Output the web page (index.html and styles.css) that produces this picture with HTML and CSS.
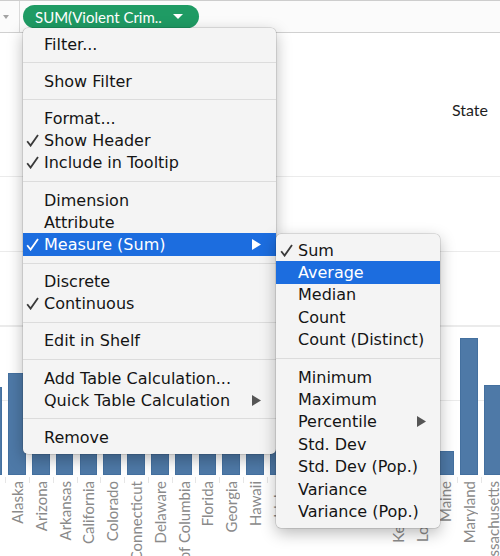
FILE: index.html
```html
<!DOCTYPE html>
<html>
<head>
<meta charset="utf-8">
<link rel="stylesheet" href="styles.css">
</head>
<body>
<div class="app">
  <div class="shelf">
    <div class="shelf-cap"><span class="caret-gray"></span></div>
    <div class="pill"><span class="pill-text">SUM(Violent Crim..</span><span class="pill-caret"></span></div>
  </div>
  <div class="view">
    <div class="header-band"><span class="field">State</span></div>
    <div class="chart">
      <div class="col"><div class="slot"><div class="bar" style="height:88px"></div></div><div class="lab"><span>Alabama</span></div></div>
      <div class="col"><div class="slot"><div class="bar" style="height:102px"></div></div><div class="lab"><span>Alaska</span></div></div>
      <div class="col"><div class="slot"><div class="bar" style="height:96px"></div></div><div class="lab"><span>Arizona</span></div></div>
      <div class="col"><div class="slot"><div class="bar" style="height:98px"></div></div><div class="lab"><span>Arkansas</span></div></div>
      <div class="col"><div class="slot"><div class="bar" style="height:85px"></div></div><div class="lab"><span>California</span></div></div>
      <div class="col"><div class="slot"><div class="bar" style="height:65px"></div></div><div class="lab"><span>Colorado</span></div></div>
      <div class="col"><div class="slot"><div class="bar" style="height:60px"></div></div><div class="lab"><span>Connecticut</span></div></div>
      <div class="col"><div class="slot"><div class="bar" style="height:104px"></div></div><div class="lab"><span>Delaware</span></div></div>
      <div class="col"><div class="slot"><div class="bar" style="height:337px"></div></div><div class="lab"><span>District of Columbia</span></div></div>
      <div class="col"><div class="slot"><div class="bar" style="height:104px"></div></div><div class="lab"><span>Florida</span></div></div>
      <div class="col"><div class="slot"><div class="bar" style="height:82px"></div></div><div class="lab"><span>Georgia</span></div></div>
      <div class="col"><div class="slot"><div class="bar" style="height:52px"></div></div><div class="lab"><span>Hawaii</span></div></div>
      <div class="col"><div class="slot"><div class="bar" style="height:45px"></div></div><div class="lab"><span>Idaho</span></div></div>
      <div class="col"><div class="slot"><div class="bar" style="height:90px"></div></div><div class="lab"><span>Illinois</span></div></div>
      <div class="col"><div class="slot"><div class="bar" style="height:70px"></div></div><div class="lab"><span>Indiana</span></div></div>
      <div class="col"><div class="slot"><div class="bar" style="height:55px"></div></div><div class="lab"><span>Iowa</span></div></div>
      <div class="col"><div class="slot"><div class="bar" style="height:68px"></div></div><div class="lab"><span>Kansas</span></div></div>
      <div class="col"><div class="slot"><div class="bar" style="height:48px"></div></div><div class="lab"><span>Kentucky</span></div></div>
      <div class="col"><div class="slot"><div class="bar" style="height:110px"></div></div><div class="lab"><span>Louisiana</span></div></div>
      <div class="col"><div class="slot"><div class="bar" style="height:24px"></div></div><div class="lab"><span>Maine</span></div></div>
      <div class="col"><div class="slot"><div class="bar" style="height:137px"></div></div><div class="lab"><span>Maryland</span></div></div>
      <div class="col"><div class="slot"><div class="bar" style="height:90px"></div></div><div class="lab"><span>Massachusetts</span></div></div>
    </div>
  </div>

  <div class="menu main-menu">
    <div class="mi"><span class="chk"></span><span class="lbl">Filter...</span></div>
    <div class="sep"></div>
    <div class="mi"><span class="chk"></span><span class="lbl">Show Filter</span></div>
    <div class="sep"></div>
    <div class="mi"><span class="chk"></span><span class="lbl">Format...</span></div>
    <div class="mi"><span class="chk"><svg width="13" height="13" viewBox="0 0 13 13"><path d="M1.2 7.2 L4.6 11.6 L12 1" fill="none" stroke="currentColor" stroke-width="1.8"/></svg></span><span class="lbl">Show Header</span></div>
    <div class="mi"><span class="chk"><svg width="13" height="13" viewBox="0 0 13 13"><path d="M1.2 7.2 L4.6 11.6 L12 1" fill="none" stroke="currentColor" stroke-width="1.8"/></svg></span><span class="lbl">Include in Tooltip</span></div>
    <div class="sep"></div>
    <div class="mi"><span class="chk"></span><span class="lbl">Dimension</span></div>
    <div class="mi"><span class="chk"></span><span class="lbl">Attribute</span></div>
    <div class="mi hl"><span class="chk"><svg width="13" height="13" viewBox="0 0 13 13"><path d="M1.2 7.2 L4.6 11.6 L12 1" fill="none" stroke="currentColor" stroke-width="1.8"/></svg></span><span class="lbl">Measure (Sum)</span><span class="arr"><svg width="9" height="11" viewBox="0 0 9 11"><polygon points="0,0 9,5.5 0,11" fill="currentColor"/></svg></span></div>
    <div class="sep"></div>
    <div class="mi"><span class="chk"></span><span class="lbl">Discrete</span></div>
    <div class="mi"><span class="chk"><svg width="13" height="13" viewBox="0 0 13 13"><path d="M1.2 7.2 L4.6 11.6 L12 1" fill="none" stroke="currentColor" stroke-width="1.8"/></svg></span><span class="lbl">Continuous</span></div>
    <div class="sep"></div>
    <div class="mi"><span class="chk"></span><span class="lbl">Edit in Shelf</span></div>
    <div class="sep"></div>
    <div class="mi"><span class="chk"></span><span class="lbl">Add Table Calculation...</span></div>
    <div class="mi"><span class="chk"></span><span class="lbl">Quick Table Calculation</span><span class="arr gray"><svg width="9" height="11" viewBox="0 0 9 11"><polygon points="0,0 9,5.5 0,11" fill="currentColor"/></svg></span></div>
    <div class="sep"></div>
    <div class="mi"><span class="chk"></span><span class="lbl">Remove</span></div>
  </div>

  <div class="menu sub-menu">
    <div class="mi"><span class="chk"><svg width="13" height="13" viewBox="0 0 13 13"><path d="M1.2 7.2 L4.6 11.6 L12 1" fill="none" stroke="currentColor" stroke-width="1.8"/></svg></span><span class="lbl">Sum</span></div>
    <div class="mi hl"><span class="chk"></span><span class="lbl">Average</span></div>
    <div class="mi"><span class="chk"></span><span class="lbl">Median</span></div>
    <div class="mi"><span class="chk"></span><span class="lbl">Count</span></div>
    <div class="mi"><span class="chk"></span><span class="lbl">Count (Distinct)</span></div>
    <div class="sep"></div>
    <div class="mi"><span class="chk"></span><span class="lbl">Minimum</span></div>
    <div class="mi"><span class="chk"></span><span class="lbl">Maximum</span></div>
    <div class="mi"><span class="chk"></span><span class="lbl">Percentile</span><span class="arr gray"><svg width="9" height="11" viewBox="0 0 9 11"><polygon points="0,0 9,5.5 0,11" fill="currentColor"/></svg></span></div>
    <div class="mi"><span class="chk"></span><span class="lbl">Std. Dev</span></div>
    <div class="mi"><span class="chk"></span><span class="lbl">Std. Dev (Pop.)</span></div>
    <div class="mi"><span class="chk"></span><span class="lbl">Variance</span></div>
    <div class="mi"><span class="chk"></span><span class="lbl">Variance (Pop.)</span></div>
  </div>
</div>
</body>
</html>
```

FILE: styles.css
```css
* { box-sizing: border-box; }
html, body { margin: 0; padding: 0; }
body {
  width: 500px;
  height: 556px;
  overflow: hidden;
  background: #fff;
  font-family: "DejaVu Sans", sans-serif;
}
.app {
  position: relative;
  width: 500px;
  height: 556px;
  overflow: hidden;
}

/* shelf */
.shelf {
  display: flex;
  height: 33px;
  border-top: 1px solid #cdcdcd;
  border-bottom: 1px solid #d0d0d0;
  background: #fbfbfb;
}
.shelf-cap {
  width: 20px;
  border-right: 1px solid #dadada;
  display: flex;
  align-items: center;
  padding-left: 3px;
}
.caret-gray {
  width: 0;
  height: 0;
  border-left: 3.5px solid transparent;
  border-right: 3.5px solid transparent;
  border-top: 4px solid #a3a3a3;
}
.pill {
  margin: 4px 0 0 3px;
  height: 23px;
  width: 176px;
  border-radius: 12px;
  background: #1f9b64;
  display: flex;
  align-items: center;
  padding: 0 16px 0 12px;
  color: #fff;
  font-family: Lato, sans-serif;
  font-size: 15px;
}
.pill-text { flex: 1; white-space: nowrap; }
.pill-caret {
  width: 0;
  height: 0;
  border-left: 5px solid transparent;
  border-right: 5px solid transparent;
  border-top: 5px solid #fff;
}

/* view */
.header-band {
  height: 143px;
  display: flex;
  justify-content: flex-end;
  padding: 67px 12px 0 0;
}
.field {
  font-family: Lato, sans-serif;
  font-size: 16px;
  line-height: 20px;
  color: #1e1e1e;
}
.chart {
  display: flex;
  margin-left: -18.7px;
  background: repeating-linear-gradient(to bottom, #ebebeb 0, #ebebeb 1px, transparent 1px, transparent 74.75px) 0 0 / 100% 299px no-repeat;
}
.col { flex: none; width: 23.8px; }
.slot {
  height: 299px;
  display: flex;
  align-items: flex-end;
  justify-content: center;
}
.bar {
  width: 17.5px;
  background: #4e79a7;
  box-shadow: inset 0 0 0 1px #44709f;
}
.lab {
  height: 81px;
  display: flex;
  justify-content: center;
  align-items: flex-start;
  padding-top: 6px;
  background: linear-gradient(#e6e6e6, #e6e6e6) no-repeat 0 2px / 1px 6px;
}
.lab span {
  writing-mode: vertical-rl;
  transform: rotate(180deg);
  font-family: Lato, sans-serif;
  font-size: 15px;
  line-height: 16px;
  color: #8a8a8a;
  white-space: nowrap;
}

/* menus */
.menu {
  position: absolute;
  background: #f4f4f4;
  border-radius: 5px;
  box-shadow: 0 0 0 0.5px rgba(0,0,0,0.2), 0 5px 16px rgba(0,0,0,0.28);
  font-family: "DejaVu Sans", sans-serif;
  font-size: 16px;
  color: #141414;
  padding: 5px 0;
}
.main-menu { left: 23px; top: 28px; width: 253px; }
.sub-menu { left: 276px; top: 234px; width: 164px; }
.mi {
  display: flex;
  align-items: center;
  height: 22.2px;
  white-space: nowrap;
}
.sub-menu .mi { height: 22.4px; }
.chk {
  flex: none;
  width: 21px;
  padding-left: 3px;
  display: flex;
  color: #3a3a3a;
}
.sub-menu .chk { width: 22px; padding-left: 4px; }
.lbl { flex: 1; }
.arr {
  flex: none;
  width: 9px;
  margin-right: 15px;
  display: flex;
}
.sub-menu .arr { margin-right: 14px; }
.arr.gray { color: #555; }
.sep {
  height: 1px;
  background: #dcdcdc;
  margin: 7px 0;
}
.hl { background: #1c6ddf; color: #fff; }
.hl .chk { color: #fff; }
```
